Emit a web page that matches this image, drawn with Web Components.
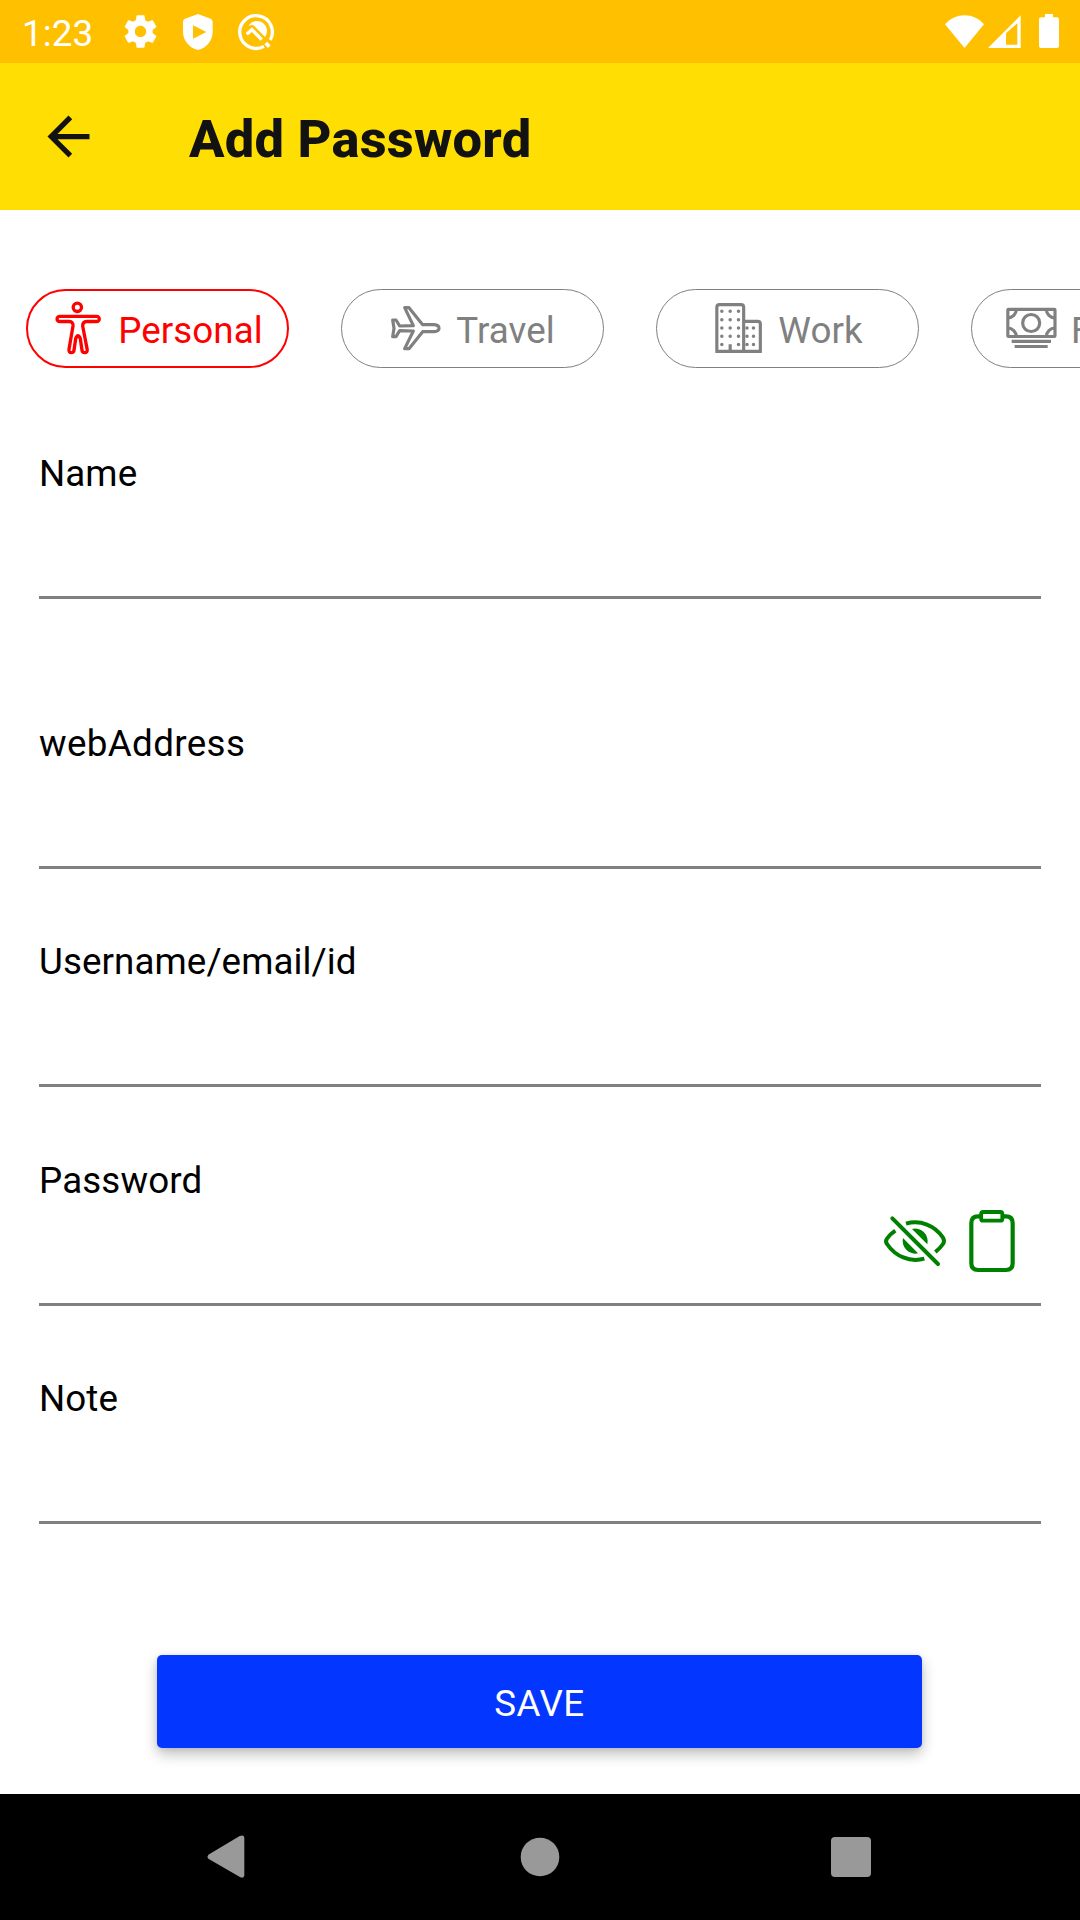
<!DOCTYPE html>
<html lang="en">
<head>
<meta charset="utf-8">
<title>Add Password</title>
<style>
html,body{margin:0;padding:0;background:#fff}
body{width:1080px;height:1920px;overflow:hidden;font-family:Roboto,sans-serif;font-size:36.75px;letter-spacing:.08px;color:#000}
</style>
</head>
<body>
<add-password-screen></add-password-screen>
<script>
const define = (name, html) => customElements.define(name, class extends HTMLElement {
  constructor() {
    super();
    const t = document.createElement('template');
    t.innerHTML = html;
    this.attachShadow({mode: 'open'}).append(t.content.cloneNode(true));
  }
});

const ICONS = {
  gear: [39, 39, '0 0 24 24', '<path fill="currentColor" d="M19.43 12.98c.04-.32.07-.64.07-.98s-.03-.66-.07-.98l2.11-1.65c.19-.15.24-.42.12-.64l-2-3.46c-.12-.22-.39-.3-.61-.22l-2.49 1c-.52-.4-1.08-.73-1.69-.98l-.38-2.65C14.46 2.18 14.25 2 14 2h-4c-.25 0-.46.18-.49.42l-.38 2.65c-.61.25-1.17.59-1.69.98l-2.49-1c-.23-.09-.49 0-.61.22l-2 3.46c-.13.22-.07.49.12.64l2.11 1.65c-.04.32-.07.65-.07.98s.03.66.07.98l-2.11 1.65c-.19.15-.24.42-.12.64l2 3.46c.12.22.39.3.61.22l2.49-1c.52.4 1.08.73 1.69.98l.38 2.65c.03.24.24.42.49.42h4c.25 0 .46-.18.49-.42l.38-2.65c.61-.25 1.17-.59 1.69-.98l2.49 1c.23.09.49 0 .61-.22l2-3.46c.12-.22.07-.49-.12-.64l-2.11-1.65zM12 15.5c-1.93 0-3.5-1.57-3.5-3.5s1.57-3.5 3.5-3.5 3.5 1.57 3.5 3.5-1.57 3.5-3.5 3.5z"/>'],
  shield: [30, 36, '549 41 90 108', '<path fill="currentColor" fill-rule="evenodd" d="M594 41L632 55Q638 58 638 64V94C638 121 619 143 594 149C569 143 549 121 549 94V64Q549 58 555 55ZM579 75V115L619 95Z"/>'],
  q: [38, 38, '711 37 114 114', '<g fill="none" stroke="currentColor"><path stroke-width="10" d="M792 137A49 49 0 1 1 811 118"/><path stroke-width="10" d="M740 101L756 87L785 117"/><path stroke-width="11" d="M797 127L808 138"/></g><path fill="currentColor" d="M747 73A30 30 0 0 1 795 109L763 76Q756 70 748 76Z"/>'],
  wifi: [39, 33, '75 41 117 99', '<path fill="currentColor" d="M75 69C108 33 160 33 192 69L133.500 140Z"/>'],
  signal: [33, 33, '202 42 99 99', '<path fill="currentColor" fill-rule="evenodd" d="M202 141L300 43V141ZM256 97V131H290V67Z"/>'],
  battery: [20, 34, '357 42 60 102', '<path fill="currentColor" d="M375 42H399V52H411Q417 52 417 58V138Q417 144 411 144H363Q357 144 357 138V58Q357 52 363 52H375Z"/>'],
  back: [63, 63, '0 0 24 24', '<path fill="currentColor" d="M20 11H7.830l5.590-5.590L12 4l-8 8 8 8 1.410-1.410L7.830 13H20v-2z"/>'],
  body: [53, 53, '152 96 159 159', '<g fill="none" stroke="currentColor" stroke-width="10" stroke-linejoin="round"><circle cx="228" cy="112" r="12.500"/><path d="M175 139H286A7.500 7.500 0 0 1 286 154.500H256Q244 155 244 168L257.500 238Q259 248 250 248Q243 248 242 241L237 206Q230 188 223 206L218 241Q217 248 210 248Q202 248 203 238L215 168Q216 155 204 154.500H175A7.500 7.500 0 0 1 175 139Z"/></g>'],
  plane: [53, 53, '179 96 159 159', '<path fill="none" stroke="currentColor" stroke-width="9.500" stroke-linejoin="round" d="M277 164H311C331 166 331 183 311 185H277L236 236H223L249 183L208 182L197 200H187L191 175L187 150H197L208 168L249 167L223 113H236Z"/>'],
  building: [53, 53, '216 96 159 159', '<g fill="none" stroke="currentColor" stroke-width="9.500"><path d="M230.500 244V112Q230.500 104 239 104H303Q311 104 311 112V244M311 154H353Q361 154 361 162V244M226 244H365.500M270.500 223V244"/></g><g fill="none" stroke="currentColor" stroke-width="10.500" stroke-linecap="round" stroke-dasharray="0 24.900"><path d="M245.500 124V226M295.500 124V226M270.500 124V205M321 174V226M340.500 174V226"/></g>'],
  cash: [53, 53, '1096 96 159 159', '<g fill="none" stroke="currentColor" stroke-width="9.500"><rect x="1104.500" y="118" width="141.500" height="81.500" rx="2"/><circle cx="1174.500" cy="159" r="25.500"/><path d="M1130 118A26 26 0 0 1 1104 144M1220 118A26 26 0 0 0 1246 144M1104 174A26 26 0 0 1 1130 200M1246 174A26 26 0 0 0 1220 200M1116 214H1234M1125 229.500H1224"/></g>'],
  eye: [62, 62, '72 60 186 186', '<g fill="none" stroke="currentColor" stroke-width="12" stroke-linejoin="round"><path stroke-linecap="round" d="M97 85L234 222"/><path d="M138 101C181 89 225 106 249 143Q255 153 249 162Q240 175 226 186M106 122Q92 131 81 146Q75 154 81 162C106 199 149 218 193 206"/></g><path fill="currentColor" d="M156 117A38 38 0 0 1 202 163ZM129 144A38 38 0 0 0 174 190Z"/>'],
  clipboard: [46, 62, '327 60 138 186', '<g fill="none" stroke="currentColor" stroke-width="12.500"><path d="M363 79H354Q334 79 334 99V220Q334 240 354 240H438Q458 240 458 220V99Q458 79 438 79H427"/><rect x="363.500" y="66" width="63.500" height="26" rx="6" stroke-width="11.500"/></g>'],
  navback: [38, 44, '200 586 114 132', '<path fill="currentColor" d="M204 645L298 589Q311 584 312 594V707Q311 717 300 713L204 657Q199 651 204 645Z"/>'],
  home: [40, 40, '0 0 40 40', '<circle cx="20" cy="20" r="19.300" fill="currentColor"/>'],
  recents: [40, 40, '0 0 40 40', '<rect width="40" height="40" rx="4" fill="currentColor"/>']
};
customElements.define('app-icon', class extends HTMLElement {
  constructor() { super(); this.attachShadow({mode: 'open'}); }
  connectedCallback() {
    const [w, h, box, art] = ICONS[this.getAttribute('name')];
    this.shadowRoot.innerHTML = `<style>:host{display:block;flex:none}svg{display:block;overflow:visible}</style><svg width="${w}" height="${h}" viewBox="${box}">${art}</svg>`;
  }
});

define('status-bar', `<style>
:host{display:flex;align-items:center;justify-content:space-between;height:63px;box-sizing:border-box;padding:0 21px 0 22px;background:#ffc000;color:#fff}
div{display:flex;align-items:center}
time{line-height:44px;width:98.5px;padding-top:4px}
.r{padding-bottom:1px}
</style><div><time>1:23</time><app-icon name="gear"></app-icon><app-icon name="shield" style="margin-left:23px"></app-icon><app-icon name="q" style="margin-left:24px"></app-icon></div>
<div class="r"><app-icon name="wifi"></app-icon><app-icon name="signal" style="margin-left:4px"></app-icon><app-icon name="battery" style="margin-left:18px"></app-icon></div>`);

define('app-bar', `<style>
:host{display:flex;align-items:center;height:147px;box-sizing:border-box;padding-left:37px;background:#ffde03;color:#121212}
h1{margin:0 0 0 89px;font-size:52.5px;line-height:62px;font-weight:850;letter-spacing:.22px;padding-top:5px}
</style><app-icon name="back"></app-icon><h1><slot></slot></h1>`);

define('category-chip', `<style>
:host{display:flex;flex:none;align-items:center;justify-content:center;gap:13px;box-sizing:border-box;width:263px;height:79px;border:1px solid gray;border-radius:39.5px;color:gray}
:host([selected]){border:2px solid red;color:red}
span{line-height:44px;padding-top:5px;white-space:nowrap}
</style><slot name="icon"></slot><span><slot></slot></span>`);

define('chip-row', `<style>:host{display:flex;gap:52px;padding-left:26px;overflow:hidden}</style><slot></slot>`);

define('text-field', `<style>
:host{display:flex;flex-direction:column;box-sizing:border-box;height:147px;border-bottom:3px solid gray}
label{line-height:44px;height:44px}
div{flex:1;display:flex;align-items:flex-start;gap:23px;padding:7px 26px 0 0}
input{flex:1;min-width:0;height:60px;border:0;outline:0;padding:0;background:none;font:inherit}
</style><label><slot></slot></label><div><input aria-label="value"><slot name="action"></slot></div>`);

define('save-button', `<style>
:host{display:block}
button{display:block;width:100%;height:93px;padding:5px 0 0;border:0;border-radius:5px;background:#0336ff;color:#fff;font:inherit;letter-spacing:.5px;line-height:44px;box-shadow:0 6px 14px rgba(0,0,0,.26),0 1px 4px rgba(0,0,0,.08)}
</style><button><slot></slot></button>`);

define('nav-bar', `<style>
:host{display:flex;align-items:center;justify-content:space-between;height:126px;box-sizing:border-box;padding:0 209px 0 207px;background:#000;color:#999}
</style><app-icon name="navback"></app-icon><app-icon name="home" style="margin-left:4px"></app-icon><app-icon name="recents"></app-icon>`);

define('add-password-screen', `<style>
:host{display:flex;flex-direction:column;width:1080px;height:1920px;overflow:hidden}
main{flex:1;min-height:0;display:flex;flex-direction:column;padding-top:79px;background:#fff}
form{display:flex;flex-direction:column;padding:84px 39px 0}
.web{margin:123px 0 71px;letter-spacing:.35px}
.pass{margin:72px 0 71px;letter-spacing:.14px}
save-button{margin:131px 119px 0 118px}
</style>
<status-bar></status-bar>
<app-bar>Add Password</app-bar>
<main>
<chip-row>
<category-chip selected><app-icon slot="icon" name="body"></app-icon>Personal</category-chip>
<category-chip><app-icon slot="icon" name="plane"></app-icon>Travel</category-chip>
<category-chip><app-icon slot="icon" name="building"></app-icon>Work</category-chip>
<category-chip><app-icon slot="icon" name="cash"></app-icon>Finance</category-chip>
</chip-row>
<form onsubmit="return false">
<text-field>Name</text-field>
<text-field class="web">webAddress</text-field>
<text-field>Username/email/id</text-field>
<text-field class="pass">Password<app-icon slot="action" name="eye" style="color:green"></app-icon><app-icon slot="action" name="clipboard" style="color:green"></app-icon></text-field>
<text-field>Note</text-field>
<save-button>SAVE</save-button>
</form>
</main>
<nav-bar></nav-bar>`);
</script>
</body>
</html>
